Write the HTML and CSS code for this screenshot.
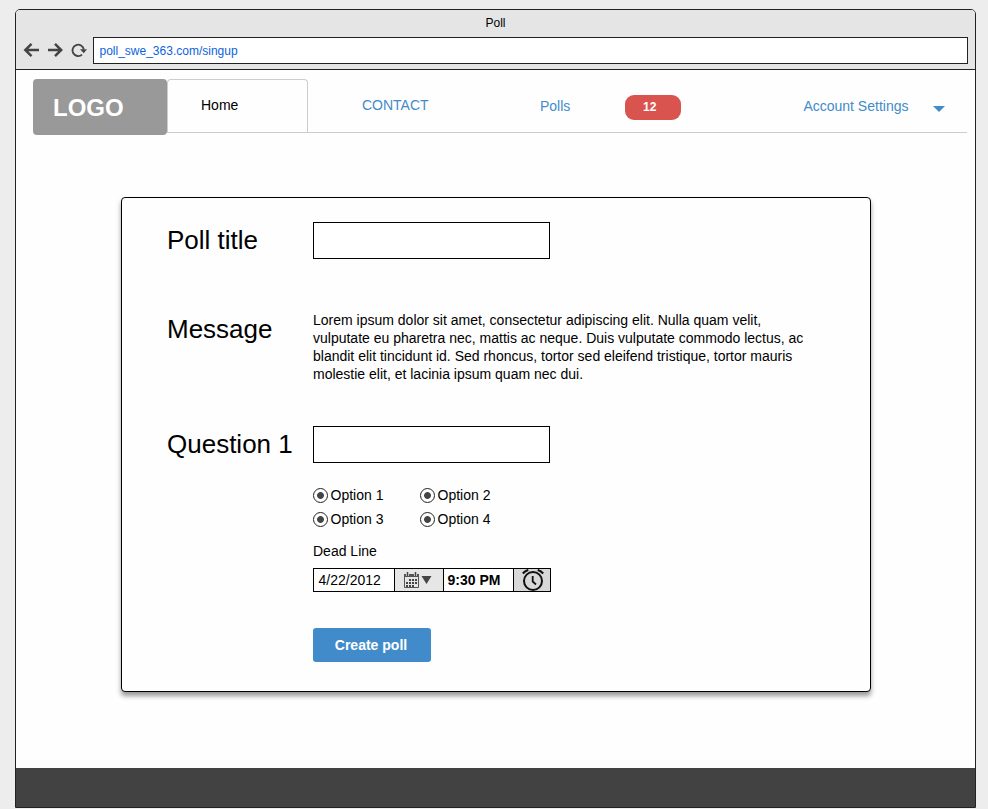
FILE: index.html
```html
<!DOCTYPE html>
<html lang="en">
<head>
<meta charset="utf-8">
<title>Poll</title>
<link rel="stylesheet" href="styles.css">
</head>
<body>
<div class="window">
  <header class="chrome">
    <div class="title">Poll</div>
    <div class="toolbar">
      <svg class="tools" width="66" height="20" viewBox="0 0 66 20" fill="none" stroke="#444">
        <path d="M16 10H2.500M8.500 3.800L2.300 10L8.500 16.200" stroke-width="2.500"/>
        <path d="M25 10H38M32 3.800L38.200 10L32 16.200" stroke-width="2.500"/>
        <path d="M59 14.600A5.700 5.700 0 1 1 60.800 9.500" stroke-width="1.900"/>
        <path d="M57 9.300H64L60.700 13.300Z" fill="#444" stroke="none"/>
      </svg>
      <div class="url">poll_swe_363.com/singup</div>
    </div>
  </header>
  <main class="page">
    <nav class="nav">
      <a class="logo">LOGO</a>
      <div class="links">
        <a class="tab">Home</a>
        <a class="contact">CONTACT</a>
        <a class="polls">Polls</a>
        <span class="badge">12</span>
        <a class="account">Account Settings</a>
        <svg class="caret" width="12" height="6" viewBox="0 0 12 6"><path d="M0 0H12L6 6Z" fill="#428bca"/></svg>
      </div>
    </nav>
    <form class="card">
      <div class="row row-title"><label>Poll title</label><input class="box" type="text"></div>
      <div class="row row-message"><label>Message</label>
        <p class="message">Lorem ipsum dolor sit amet, consectetur adipiscing elit. Nulla quam velit,<br>vulputate eu pharetra nec, mattis ac neque. Duis vulputate commodo lectus, ac<br>blandit elit tincidunt id. Sed rhoncus, tortor sed eleifend tristique, tortor mauris<br>molestie elit, et lacinia ipsum quam nec dui.</p>
      </div>
      <div class="row row-question"><label>Question 1</label><input class="box" type="text"></div>
      <div class="details">
        <div class="options">
          <span class="option"><i class="radio"></i>Option 1</span>
          <span class="option"><i class="radio"></i>Option 2</span>
          <span class="option"><i class="radio"></i>Option 3</span>
          <span class="option"><i class="radio"></i>Option 4</span>
        </div>
        <div class="deadline">Dead Line</div>
        <div class="picker">
          <span class="date">4/22/2012</span>
          <span class="calendar">
            <svg width="28" height="16" viewBox="0 0 28 16">
              <path d="M.5 2.500H14.500V15.500H.5Z" fill="none" stroke="#555"/>
              <path d="M0 2H15V5H0Z" fill="#555"/>
              <path d="M3.500 0V4M11.500 0V4" stroke="#e6e6e6" stroke-width="3"/>
              <path d="M3.500 0V4M11.500 0V4" stroke="#444" stroke-width="1.500"/>
              <path d="M5 8H13M2 11H13M2 14H10" stroke="#444" stroke-width="2" stroke-dasharray="2 1"/>
              <path d="M17.500 4H27.500L22.500 12Z" fill="#444"/>
            </svg>
          </span>
          <span class="time">9:30 PM</span>
          <span class="alarm">
            <svg width="22" height="22" viewBox="0 0 22 22" fill="none" stroke="#111" stroke-width="2">
              <circle cx="11" cy="12" r="9"/>
              <path d="M10.700 7V12.500L14 15.500" stroke-width="1.800"/>
              <path d="M.8 4.500Q3 1.800 6.300 1M21.200 4.500Q19 1.800 15.700 1" stroke-width="2.200"/>
            </svg>
          </span>
        </div>
        <button class="create" type="button">Create poll</button>
      </div>
    </form>
  </main>
  <footer class="footer"></footer>
</div>
</body>
</html>
```
FILE: styles.css
```css
* { box-sizing: border-box; }
body {
  margin: 0;
  height: 809px;
  padding: 9px 12px 1px 15px;
  background: #ededed;
  font: 14px/18px "Liberation Sans", Arial, sans-serif;
  color: #000;
  overflow: hidden;
}
.window {
  width: 961px;
  height: 799px;
  border: 1px solid #222;
  border-radius: 5px 5px 0 0;
  background: #fefefe;
  display: flex;
  flex-direction: column;
  overflow: hidden;
}
.chrome {
  height: 60px;
  background: #e5e5e5;
  border-bottom: 1px solid #222;
  font-size: 12px;
}
.title { height: 27px; line-height: 26px; text-align: center; }
.toolbar { display: flex; padding: 0 7px; }
.tools { margin: 3px 4px 0 0; flex: none; }
.url {
  flex: 1;
  height: 27px;
  border: 1px solid #222;
  background: #fff;
  color: #0b63de;
  padding-left: 5.5px;
  line-height: 26px;
}
.page { flex: 1; padding: 9px 8px 0 17px; }
.nav { display: flex; height: 56px; }
.logo {
  width: 134px;
  background: #999;
  border-radius: 4px;
  color: #fff;
  font-size: 24px;
  font-weight: bold;
  line-height: 57px;
  padding-left: 20px;
}
.links {
  flex: 1;
  height: 54px;
  border-bottom: 1px solid #ccc;
  display: flex;
  align-items: flex-start;
  color: #428bca;
}
.tab {
  width: 141px;
  height: 53px;
  border: 1px solid #ccc;
  border-bottom: 0;
  border-radius: 4px 4px 0 0;
  color: #000;
  padding: 16px 0 0 33px;
}
.contact { width: 178px; margin-left: 54px; padding-top: 17px; }
.polls { width: 85px; padding-top: 18px; }
.badge {
  width: 56px;
  height: 25px;
  margin-top: 16px;
  border-radius: 9px;
  background: #d9534f;
  color: #fff;
  font-size: 12px;
  font-weight: bold;
  line-height: 24px;
  padding-left: 18px;
}
.account { margin-left: 122.4px; width: 130px; padding-top: 18px; white-space: nowrap; }
.caret { margin-top: 27px; }
.card {
  width: 750px;
  height: 495px;
  margin: 62px 0 0 88px;
  border: 1px solid #000;
  border-radius: 4px;
  background: #fefefe;
  box-shadow: 0 4px 5px rgba(0, 0, 0, .4);
  padding: 24px 45px 0;
}
.row { display: grid; grid-template-columns: 146px 1fr; }
.row label { font-size: 26px; line-height: 36px; white-space: nowrap; }
.row-title { height: 89px; }
.row-message { height: 115px; }
.row-question { height: 59px; }
.box {
  width: 237px;
  height: 37px;
  border: 1px solid #000;
  background: #fff;
  border-radius: 0;
  padding: 0 8px;
  font: inherit;
}
.message { margin: 0; white-space: nowrap; }
.details { margin-left: 146px; }
.options { display: grid; grid-template-columns: 107px 107px; grid-auto-rows: 24px; }
.option { display: flex; align-items: center; gap: 2.5px; height: 20px; line-height: 20px; }
.radio {
  width: 15px;
  height: 15px;
  border: 1px solid #222;
  border-radius: 50%;
  background: radial-gradient(circle, #444 3px, #fff 3.8px);
}
.deadline { margin-top: 9px; height: 26px; }
.picker { display: flex; width: 238px; height: 24px; border: 1px solid #000; line-height: 22px; background: #fff; }
.date { width: 80px; padding-left: 4.5px; }
.calendar { width: 50px; background: #e6e6e6; border: solid #000; border-width: 0 1px; padding: 3px 0 0 9px; }
.calendar svg, .alarm svg { display: block; }
.time { width: 69px; padding-left: 3.5px; font-weight: bold; }
.alarm { flex: 1; background: #d8d8d8; border-left: 1px solid #000; padding-left: 8px; }
.create {
  display: block;
  width: 118px;
  height: 34px;
  margin-top: 36px;
  padding: 0 2px 0 0;
  border: 0;
  border-radius: 3px;
  background: #428bca;
  color: #fff;
  font: bold 14px "Liberation Sans", Arial, sans-serif;
}
.footer { height: 39px; background: #424242; flex: none; }
```
